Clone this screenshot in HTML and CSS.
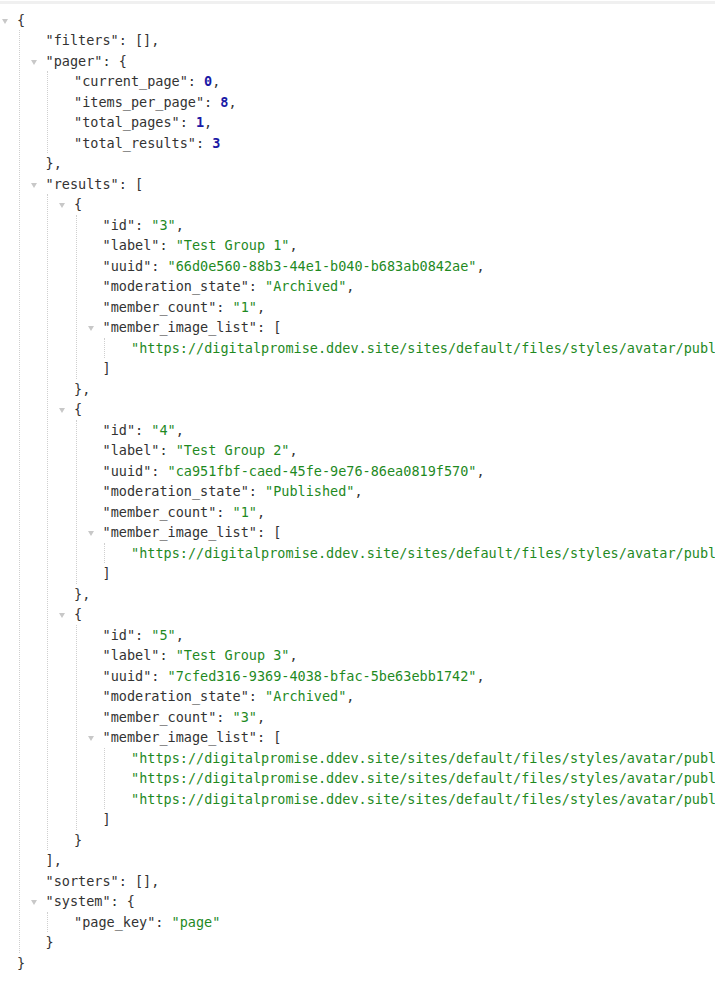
FILE: index.html
```html
<!DOCTYPE html>
<html lang="en">
<head>
<meta charset="utf-8">
<title>JSON</title>
<link rel="stylesheet" href="styles.css">
</head>
<body>
<div class="topbar"></div>
<div class="json">
  <div class="line open">{</div>
  <div class="inner">
    <div class="line"><span class="k">"filters"</span>: [],</div>
    <div class="line open"><span class="k">"pager"</span>: {</div>
    <div class="inner">
      <div class="line"><span class="k">"current_page"</span>: <span class="n">0</span>,</div>
      <div class="line"><span class="k">"items_per_page"</span>: <span class="n">8</span>,</div>
      <div class="line"><span class="k">"total_pages"</span>: <span class="n">1</span>,</div>
      <div class="line"><span class="k">"total_results"</span>: <span class="n">3</span></div>
    </div>
    <div class="line">},</div>
    <div class="line open"><span class="k">"results"</span>: [</div>
    <div class="inner">
      <div class="line open">{</div>
      <div class="inner">
        <div class="line"><span class="k">"id"</span>: <span class="s">"3"</span>,</div>
        <div class="line"><span class="k">"label"</span>: <span class="s">"Test Group 1"</span>,</div>
        <div class="line"><span class="k">"uuid"</span>: <span class="s">"66d0e560-88b3-44e1-b040-b683ab0842ae"</span>,</div>
        <div class="line"><span class="k">"moderation_state"</span>: <span class="s">"Archived"</span>,</div>
        <div class="line"><span class="k">"member_count"</span>: <span class="s">"1"</span>,</div>
        <div class="line open"><span class="k">"member_image_list"</span>: [</div>
        <div class="inner">
          <div class="line"><span class="s">"https://digitalpromise.ddev.site/sites/default/files/styles/avatar/public/pictures/avatar_1.png"</span></div>
        </div>
        <div class="line">]</div>
      </div>
      <div class="line">},</div>
      <div class="line open">{</div>
      <div class="inner">
        <div class="line"><span class="k">"id"</span>: <span class="s">"4"</span>,</div>
        <div class="line"><span class="k">"label"</span>: <span class="s">"Test Group 2"</span>,</div>
        <div class="line"><span class="k">"uuid"</span>: <span class="s">"ca951fbf-caed-45fe-9e76-86ea0819f570"</span>,</div>
        <div class="line"><span class="k">"moderation_state"</span>: <span class="s">"Published"</span>,</div>
        <div class="line"><span class="k">"member_count"</span>: <span class="s">"1"</span>,</div>
        <div class="line open"><span class="k">"member_image_list"</span>: [</div>
        <div class="inner">
          <div class="line"><span class="s">"https://digitalpromise.ddev.site/sites/default/files/styles/avatar/public/pictures/avatar_1.png"</span></div>
        </div>
        <div class="line">]</div>
      </div>
      <div class="line">},</div>
      <div class="line open">{</div>
      <div class="inner">
        <div class="line"><span class="k">"id"</span>: <span class="s">"5"</span>,</div>
        <div class="line"><span class="k">"label"</span>: <span class="s">"Test Group 3"</span>,</div>
        <div class="line"><span class="k">"uuid"</span>: <span class="s">"7cfed316-9369-4038-bfac-5be63ebb1742"</span>,</div>
        <div class="line"><span class="k">"moderation_state"</span>: <span class="s">"Archived"</span>,</div>
        <div class="line"><span class="k">"member_count"</span>: <span class="s">"3"</span>,</div>
        <div class="line open"><span class="k">"member_image_list"</span>: [</div>
        <div class="inner">
          <div class="line"><span class="s">"https://digitalpromise.ddev.site/sites/default/files/styles/avatar/public/pictures/avatar_1.png"</span>,</div>
          <div class="line"><span class="s">"https://digitalpromise.ddev.site/sites/default/files/styles/avatar/public/pictures/avatar_2.png"</span>,</div>
          <div class="line"><span class="s">"https://digitalpromise.ddev.site/sites/default/files/styles/avatar/public/pictures/avatar_3.png"</span></div>
        </div>
        <div class="line">]</div>
      </div>
      <div class="line">}</div>
    </div>
    <div class="line">],</div>
    <div class="line"><span class="k">"sorters"</span>: [],</div>
    <div class="line open"><span class="k">"system"</span>: {</div>
    <div class="inner">
      <div class="line"><span class="k">"page_key"</span>: <span class="s">"page"</span></div>
    </div>
    <div class="line">}</div>
  </div>
  <div class="line">}</div>
</div>
</body>
</html>
```

FILE: styles.css
```css
html, body {
  margin: 0;
  padding: 0;
  background: #ffffff;
  overflow: hidden;
}

.topbar {
  height: 3px;
  margin-top: 1px;
  background: #f0f0f0;
}

.json {
  padding: 5.75px 0 0 17px;
  font-family: "DejaVu Sans Mono", monospace;
  font-size: 13.5px;
  color: #333333;
}

.line {
  position: relative;
  height: 20.5px;
  line-height: 20.5px;
  white-space: pre;
}

.line.open::before {
  content: "";
  position: absolute;
  left: -15px;
  top: 9px;
  width: 0;
  height: 0;
  border-left: 3.5px solid transparent;
  border-right: 3.5px solid transparent;
  border-top: 5px solid #c8c8c8;
}

.inner {
  margin-left: 1.5px;
  border-left: 1px dotted #cfcfcf;
  padding-left: 26px;
}

.k {
  color: #333333;
}

.s {
  color: #1f8a1f;
}

.n {
  color: #1a1aa6;
  font-weight: bold;
}
```
